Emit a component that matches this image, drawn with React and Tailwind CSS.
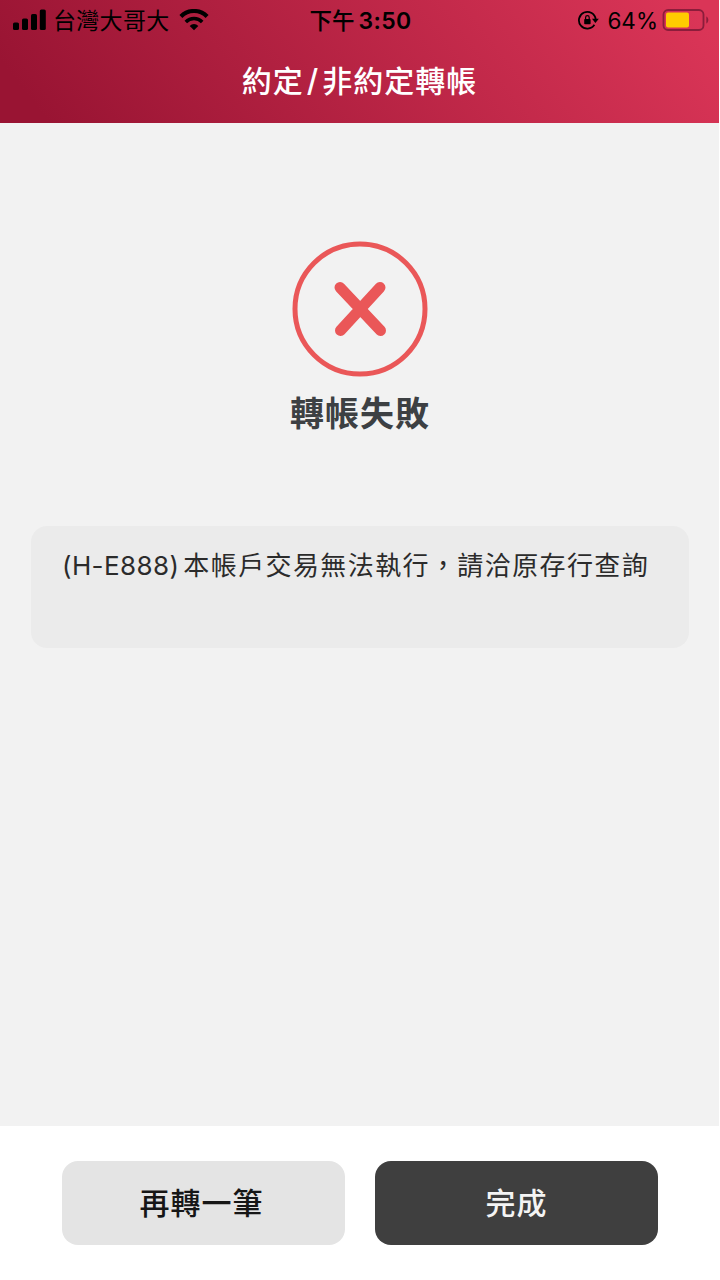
import React from 'react';

function SignalIcon() {
  return (
    <svg width="34" height="22" viewBox="0 0 34 22" fill="currentColor" aria-hidden="true">
      <rect x="1" y="13.5" width="6" height="7.5" rx="1.6" />
      <rect x="10" y="9.5" width="6" height="11.5" rx="1.6" />
      <rect x="19" y="5" width="6" height="16" rx="1.6" />
      <rect x="27.8" y="0.5" width="6" height="20.5" rx="1.6" />
    </svg>
  );
}

function WifiIcon() {
  return (
    <svg width="30" height="22" viewBox="0 0 30 22" className="-ml-px" aria-hidden="true">
      <path d="M1.9 7.4 A18.6 18.6 0 0 1 28.1 7.4" fill="none" stroke="currentColor" strokeWidth="4.2" />
      <path d="M6.8 12.9 A11.6 11.6 0 0 1 23.2 12.9" fill="none" stroke="currentColor" strokeWidth="3.6" />
      <path d="M15 21.2 L10.7 16.9 A6 6 0 0 1 19.3 16.9 Z" fill="currentColor" />
    </svg>
  );
}

function RotationLockIcon() {
  return (
    <svg width="21" height="20" viewBox="0 0 21 20" aria-hidden="true">
      <path d="M16.4 14.8 A8.4 8.4 0 1 1 17.7 9.4" fill="none" stroke="currentColor" strokeWidth="1.8" />
      <path d="M14 8.8 H20.8 L17.4 13 Z" fill="currentColor" />
      <rect x="6.2" y="9" width="6.4" height="5.2" rx="0.8" fill="currentColor" />
      <path d="M7.6 9.4 V7.4 A1.8 1.8 0 0 1 11.2 7.4 V9.4" fill="none" stroke="currentColor" strokeWidth="1.2" />
    </svg>
  );
}

function BatteryIcon() {
  return (
    <svg width="47" height="22" viewBox="0 0 47 22" aria-hidden="true">
      <rect x="1.5" y="1" width="40" height="20" rx="4.5" fill="none" stroke="#8b1d3b" strokeWidth="1.8" />
      <rect x="4" y="3.6" width="23" height="14.8" rx="2" fill="#ffcc00" />
      <path d="M44.3 7.5 C47 8.6 47 13.4 44.3 14.5 Z" fill="#8b1d3b" />
    </svg>
  );
}

function StatusBar() {
  return (
    <div className="grid h-10 grid-cols-3 items-center pl-3 pr-2.5 text-black">
      <div className="flex items-center">
        <SignalIcon />
        <span className="ml-[7px] mr-2.5 whitespace-nowrap pt-0.5 text-[23px] leading-none tracking-[0.3px]">台灣大哥大</span>
        <WifiIcon />
      </div>
      <div className="flex items-center justify-center gap-1 whitespace-nowrap pt-0.5 leading-none">
        <span className="text-[22.5px] font-medium">下午</span>
        <span className="text-[23px] font-semibold tracking-[0.4px]">3:50</span>
      </div>
      <div className="flex items-center justify-end">
        <RotationLockIcon />
        <span className="ml-2 mr-1 pt-0.5 text-[22.5px] leading-none">64%</span>
        <BatteryIcon />
      </div>
    </div>
  );
}

function Header() {
  return (
    <header className="h-[123px] bg-[linear-gradient(52deg,#991433_6%,#da3557_96%)]">
      <StatusBar />
      <h1 className="pt-[21px] text-center text-[30px] font-medium leading-10 tracking-[1px] text-white">
        約定<span className="ml-[3px] mr-[3px] text-[31px] leading-none">/</span>非約定轉帳
      </h1>
    </header>
  );
}

function ErrorIcon() {
  return (
    <svg width="136" height="136" viewBox="0 0 136 136" fill="none" stroke="#ea5758" aria-hidden="true">
      <circle cx="68" cy="68" r="65" strokeWidth="5" />
      <path d="M48 46.5 L88.5 89.5 M88 46.5 L48.5 89.5" strokeWidth="11" strokeLinecap="round" />
    </svg>
  );
}

export default function App() {
  return (
    <div className="h-[1280px] w-[720px] overflow-hidden bg-white font-['Inter','Noto_Sans_CJK_TC',sans-serif]">
      <div className="flex h-full w-[719px] flex-col">
        <Header />

        <main className="flex flex-1 flex-col items-center bg-[#f2f2f2] pl-[31px] pr-[30px] pt-[118px]">
          <ErrorIcon />
          <h2 className="mt-[13px] text-[34px] font-semibold leading-[48px] tracking-[1px] text-[#3d4043]">轉帳失敗</h2>
          <section className="mt-[88px] h-[122px] w-full rounded-2xl bg-[#ebebeb] pl-[31px] pt-5 text-[#2b2b2b]">
            <p className="whitespace-nowrap text-[26px] leading-10 tracking-[1.4px]">
              <span className="mr-1 tracking-[0.4px]">(H-E888)</span>
              本帳戶交易無法執行，請洽原存行查詢
            </p>
          </section>
        </main>

        <footer className="grid h-[154px] grid-cols-2 gap-[30px] bg-white pl-[62px] pr-[61px] pt-[35px]">
          <button className="h-[84px] rounded-2xl bg-[#e4e4e4] pr-1 text-[30px] font-medium tracking-[1px] text-[#161616]">
            再轉一筆
          </button>
          <button className="h-[84px] rounded-2xl bg-[#3f3f3f] text-[30px] font-medium tracking-[1px] text-[#f4f4f4]">
            完成
          </button>
        </footer>
      </div>
    </div>
  );
}
